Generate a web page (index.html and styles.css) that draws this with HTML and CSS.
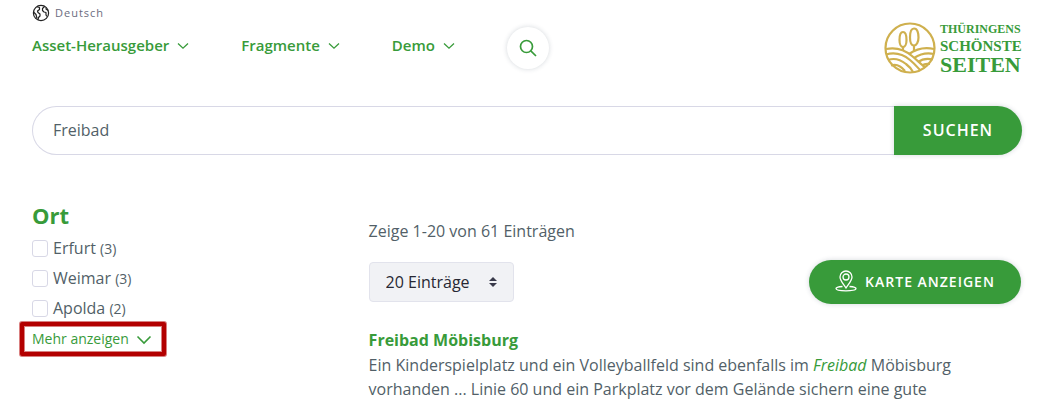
FILE: index.html
```html
<!DOCTYPE html>
<html lang="de">
<head>
    <meta charset="UTF-8">
    <meta name="viewport" content="width=device-width, initial-scale=1.0">
    <title>Thüringens schönste Seiten - Suche</title>
    <link rel="stylesheet" href="styles.css">
</head>
<body>
    <header class="header">
        <div class="header-left">
            <a href="#" class="language">
                <svg width="18" height="18" viewBox="0 0 18 18" fill="none" stroke="#222" stroke-width="1.200" stroke-linejoin="round">
                    <circle cx="9" cy="9" r="7.600"/>
                    <path d="M5 2.700L7.500 3.500L7.500 5.500L5.500 7L6 8.500L8 10L8 12L6.500 13.500L6 15.800M1.500 8L4 10.500L5 14.500"/>
                    <path d="M12.500 2.500L10.500 4.500L10.500 6.500L12 8L14 8.500L14 11L15 12.500M13.500 4.500L16 6.500"/>
                </svg>
                <span>Deutsch</span>
            </a>
            <div class="nav-row">
                <nav class="nav">
                    <a href="#" class="nav-link">Asset-Herausgeber <svg width="12" height="8" viewBox="0 0 12 8"><path d="M1 1.500L6 6.200L11 1.500"/></svg></a>
                    <a href="#" class="nav-link">Fragmente <svg width="12" height="8" viewBox="0 0 12 8"><path d="M1 1.500L6 6.200L11 1.500"/></svg></a>
                    <a href="#" class="nav-link">Demo <svg width="12" height="8" viewBox="0 0 12 8"><path d="M1 1.500L6 6.200L11 1.500"/></svg></a>
                </nav>
                <button type="button" class="search-toggle" aria-label="Suche">
                    <svg width="18" height="18" viewBox="0 0 18 18" fill="none" stroke="#389b3a" stroke-width="1.700">
                        <circle cx="7.500" cy="7.500" r="6"/>
                        <path d="M11.800 11.800L17 17"/>
                    </svg>
                </button>
            </div>
        </div>
        <a href="#" class="logo">
            <svg width="52" height="52" viewBox="0 0 52 52" fill="none" stroke="#cfb04e" stroke-width="2.200">
                <circle cx="26" cy="26" r="24.500"/>
                <path d="M19 10C16 10 15.500 14 15.500 18C15.500 22 17 25 19 25C21 25 22.500 22 22.500 18C22.500 14 22 10 19 10Z"/>
                <path d="M30 6.500C26.500 6.500 26 11 26 15.500C26 20 27.500 23.500 30 23.500C32.500 23.500 34.500 20 34.500 15.500C34.500 11 33.500 6.500 30 6.500Z"/>
                <path d="M19 25V28.500M30 23V30"/>
                <path d="M2 27C12 25 21 28 28 34C34 39 38 43 41 45"/>
                <path d="M2 32.500C11 30 20 33 26 38C31 42 34 46 36 48"/>
                <path d="M4 38C11 35.500 17 38 22 42C26 45 28 48 29 50"/>
                <path d="M7 43.500C13 41.500 17 44 21 49"/>
                <path d="M25 32C32 27 41 25 50 27"/>
                <path d="M30 36C36 32 43 30.500 50 32"/>
                <path d="M34 40C38 37 43 36 49 37.500"/>
                <path d="M38 43.500C40 42 43 41.500 46 42"/>
            </svg>
            <span class="logo-text">
                <span class="logo-small">THÜRINGENS</span>
                <span class="logo-medium">SCHÖNSTE</span>
                <span class="logo-large">SEITEN</span>
            </span>
        </a>
    </header>

    <form class="search-bar">
        <input type="text" class="search-input" value="Freibad" aria-label="Suchbegriff">
        <button type="submit" class="search-submit">SUCHEN</button>
    </form>

    <main class="main">
        <aside class="filter">
            <h2>Ort</h2>
            <label class="filter-item"><input type="checkbox"> <span>Erfurt <small>(3)</small></span></label>
            <label class="filter-item"><input type="checkbox"> <span>Weimar <small>(3)</small></span></label>
            <label class="filter-item"><input type="checkbox"> <span>Apolda <small>(2)</small></span></label>
            <button type="button" class="more">Mehr anzeigen <svg width="16" height="10" viewBox="0 0 16 10"><path d="M1.500 1.500L8 8L14.500 1.500"/></svg></button>
        </aside>
        <section class="results">
            <p class="count">Zeige 1-20 von 61 Einträgen</p>
            <div class="toolbar">
                <select class="page-size" aria-label="Einträge pro Seite">
                    <option>20 Einträge</option>
                    <option>40 Einträge</option>
                </select>
                <button type="button" class="map-button">
                    <svg width="22" height="22" viewBox="0 0 22 22" fill="none" stroke="#fff" stroke-width="1.300">
                        <path d="M11 18C8 13.500 5 10.500 5 7A6 6 0 0 1 17 7C17 10.500 14 13.500 11 18Z"/>
                        <circle cx="11" cy="7" r="3"/>
                        <path d="M7.500 16.500C3.500 16.800 1 17.500 1 18.500C1 20 5.500 20.800 11 20.800S21 20 21 18.500C21 17.500 18.500 16.800 14.500 16.500"/>
                    </svg>
                    <span>KARTE ANZEIGEN</span>
                </button>
            </div>
            <article class="result">
                <h3><a href="#">Freibad Möbisburg</a></h3>
                <p>Ein Kinderspielplatz und ein Volleyballfeld sind ebenfalls im <em>Freibad</em> Möbisburg vorhanden ... Linie 60 und ein Parkplatz vor dem Gelände sichern eine gute</p>
            </article>
        </section>
    </main>
</body>
</html>
```
FILE: styles.css
```css
*, *::before, *::after { box-sizing: border-box; }
body { margin: 0; padding: 4px 36px 0 32px; background: #fff; color: #525f68; font-family: "Open Sans", sans-serif; font-size: 16px; line-height: 24px; }
a { text-decoration: none; color: #389b3a; }
h2, h3, p { margin: 0; }
button, input, select { font-family: inherit; margin: 0; }
button { cursor: pointer; }

/* Kopfbereich */
.header { display: flex; justify-content: space-between; align-items: flex-start; height: 102px; }
.language { display: flex; align-items: center; gap: 5px; height: 18px; color: #6b6c7e; font-size: 11px; letter-spacing: 1px; }
.nav-row { display: flex; align-items: flex-start; gap: 52px; padding-top: 5px; }
.nav { display: flex; gap: 52px; padding-top: 6px; }
.nav-link { display: flex; align-items: center; gap: 8px; font-size: 15px; font-weight: 600; }
.nav-link svg, .more svg { fill: none; stroke: #389b3a; stroke-width: 1.3; }
.nav-link svg { margin-top: 2px; }
.search-toggle { display: flex; align-items: center; justify-content: center; width: 42px; height: 42px; padding: 0; border: 0; border-radius: 50%; background: #fff; box-shadow: 0 0 5px rgba(40, 60, 80, 0.2); }
.logo { display: flex; gap: 4px; padding-top: 18px; }
.logo-text { display: flex; flex-direction: column; width: 82px; font-family: "Liberation Serif", serif; font-weight: bold; white-space: nowrap; }
.logo-small { font-size: 12px; line-height: 15px; }
.logo-medium { font-size: 15px; line-height: 18px; }
.logo-large { font-size: 22px; line-height: 20px; }

/* Suchleiste */
.search-bar { display: flex; height: 49px; }
.search-input { flex: 1; min-width: 0; padding: 0 20px 2px; border: 1px solid #d8d8e6; border-right: 0; border-radius: 25px 0 0 25px; color: #525f68; font-size: 16px; outline: 0; }
.search-submit { width: 128px; padding: 0 0 2px; border: 0; border-radius: 0 25px 25px 0; background: #389b3a; color: #fff; font-size: 16px; font-weight: 600; letter-spacing: 1px; box-shadow: 0 0 5px rgba(40, 60, 80, 0.2); }

/* Filter und Ergebnisse */
.main { display: grid; grid-template-columns: 34% 1fr; padding-top: 46px; }
.filter h2 { padding-bottom: 4px; color: #389b3a; font-size: 22px; line-height: 28px; }
.filter-item { display: flex; align-items: center; gap: 5px; height: 30px; }
.filter-item input { appearance: none; width: 16px; height: 17px; margin: 0; border: 1px solid #d8d8e6; border-radius: 3px; background: #fff; }
.filter-item small { font-size: 14px; }
.more { display: flex; align-items: center; gap: 7px; height: 34px; margin: -1px 0 0 -12px; padding: 0 10px 2px 8px; border: 4px solid #b30000; border-radius: 2px; background: #fff; color: #389b3a; font-size: 14px; box-shadow: 0 0 0 1px #d98080, inset 0 0 0 1px #d98080; }
.more svg { margin-top: 4px; stroke-width: 1.6; }
.count { padding-top: 18px; }
.toolbar { display: flex; justify-content: space-between; align-items: center; padding: 17px 1px 0 0; }
.page-size { appearance: none; width: 145px; height: 40px; padding: 0 16px; border: 1px solid #e2e3ec; border-radius: 4px; color: #272833; font-size: 16px; background: #f1f2f5 url("data:image/svg+xml,%3Csvg xmlns='http://www.w3.org/2000/svg' width='8' height='10'%3E%3Cpath d='M4 0L8 4H0ZM4 10L0 6H8Z' fill='%23393a4a'/%3E%3C/svg%3E") no-repeat right 16px center; }
.map-button { display: flex; align-items: center; justify-content: center; gap: 8px; width: 212px; height: 44px; padding: 0 0 2px; border: 0; border-radius: 22px; background: #389b3a; color: #fff; font-size: 14px; font-weight: 600; letter-spacing: 1px; box-shadow: 0 0 5px rgba(40, 60, 80, 0.2); }
.result { padding-top: 24px; }
.result h3 { padding-bottom: 1px; font-size: 16px; line-height: 24px; }
.result p { max-width: 600px; }
.result em { color: #389b3a; }
```
